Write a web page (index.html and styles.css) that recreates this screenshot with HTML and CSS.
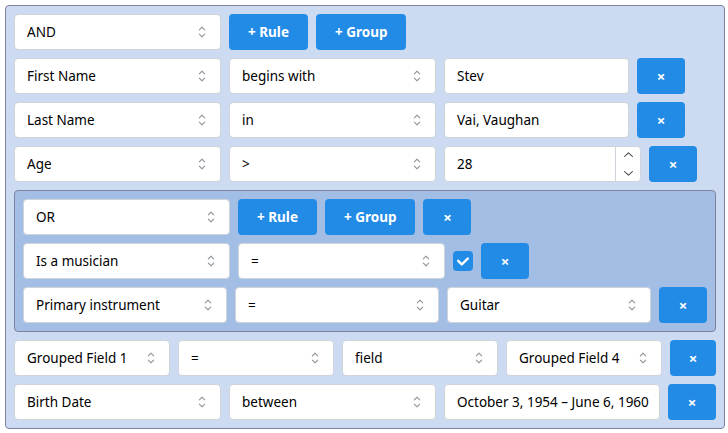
FILE: index.html
```html
<!DOCTYPE html>
<html lang="en">
<head>
<meta charset="utf-8">
<title>Query Builder</title>
<link rel="stylesheet" href="styles.css">
</head>
<body>
<div class="qb">
  <div class="group">
    <div class="row">
      <div class="select"><span class="val">AND</span><span class="chev"><svg width="18" height="18" viewBox="0 0 15 15"><path d="M4.93 5.43a.45.45 0 0 0 .64.64L7.5 4.14l1.93 1.93a.45.45 0 0 0 .64-.64L7.82 3.18a.45.45 0 0 0-.64 0L4.93 5.43zM10.07 9.57a.45.45 0 0 0-.64-.64L7.5 10.86 5.57 8.93a.45.45 0 0 0-.64.64l2.25 2.25a.45.45 0 0 0 .64 0l2.25-2.25z" fill="currentColor"/></svg></span></div>
      <button class="btn">+ Rule</button>
      <button class="btn">+ Group</button>
    </div>

    <div class="row">
      <div class="select"><span class="val">First Name</span><span class="chev"><svg width="18" height="18" viewBox="0 0 15 15"><path d="M4.93 5.43a.45.45 0 0 0 .64.64L7.5 4.14l1.93 1.93a.45.45 0 0 0 .64-.64L7.82 3.18a.45.45 0 0 0-.64 0L4.93 5.43zM10.07 9.57a.45.45 0 0 0-.64-.64L7.5 10.86 5.57 8.93a.45.45 0 0 0-.64.64l2.25 2.25a.45.45 0 0 0 .64 0l2.25-2.25z" fill="currentColor"/></svg></span></div>
      <div class="select"><span class="val">begins with</span><span class="chev"><svg width="18" height="18" viewBox="0 0 15 15"><path d="M4.93 5.43a.45.45 0 0 0 .64.64L7.5 4.14l1.93 1.93a.45.45 0 0 0 .64-.64L7.82 3.18a.45.45 0 0 0-.64 0L4.93 5.43zM10.07 9.57a.45.45 0 0 0-.64-.64L7.5 10.86 5.57 8.93a.45.45 0 0 0-.64.64l2.25 2.25a.45.45 0 0 0 .64 0l2.25-2.25z" fill="currentColor"/></svg></span></div>
      <div class="input text">Stev</div>
      <button class="btn rm">×</button>
    </div>

    <div class="row">
      <div class="select"><span class="val">Last Name</span><span class="chev"><svg width="18" height="18" viewBox="0 0 15 15"><path d="M4.93 5.43a.45.45 0 0 0 .64.64L7.5 4.14l1.93 1.93a.45.45 0 0 0 .64-.64L7.82 3.18a.45.45 0 0 0-.64 0L4.93 5.43zM10.07 9.57a.45.45 0 0 0-.64-.64L7.5 10.86 5.57 8.93a.45.45 0 0 0-.64.64l2.25 2.25a.45.45 0 0 0 .64 0l2.25-2.25z" fill="currentColor"/></svg></span></div>
      <div class="select"><span class="val">in</span><span class="chev"><svg width="18" height="18" viewBox="0 0 15 15"><path d="M4.93 5.43a.45.45 0 0 0 .64.64L7.5 4.14l1.93 1.93a.45.45 0 0 0 .64-.64L7.82 3.18a.45.45 0 0 0-.64 0L4.93 5.43zM10.07 9.57a.45.45 0 0 0-.64-.64L7.5 10.86 5.57 8.93a.45.45 0 0 0-.64.64l2.25 2.25a.45.45 0 0 0 .64 0l2.25-2.25z" fill="currentColor"/></svg></span></div>
      <div class="input text">Vai, Vaughan</div>
      <button class="btn rm">×</button>
    </div>

    <div class="row">
      <div class="select"><span class="val">Age</span><span class="chev"><svg width="18" height="18" viewBox="0 0 15 15"><path d="M4.93 5.43a.45.45 0 0 0 .64.64L7.5 4.14l1.93 1.93a.45.45 0 0 0 .64-.64L7.82 3.18a.45.45 0 0 0-.64 0L4.93 5.43zM10.07 9.57a.45.45 0 0 0-.64-.64L7.5 10.86 5.57 8.93a.45.45 0 0 0-.64.64l2.25 2.25a.45.45 0 0 0 .64 0l2.25-2.25z" fill="currentColor"/></svg></span></div>
      <div class="select"><span class="val">&gt;</span><span class="chev"><svg width="18" height="18" viewBox="0 0 15 15"><path d="M4.93 5.43a.45.45 0 0 0 .64.64L7.5 4.14l1.93 1.93a.45.45 0 0 0 .64-.64L7.82 3.18a.45.45 0 0 0-.64 0L4.93 5.43zM10.07 9.57a.45.45 0 0 0-.64-.64L7.5 10.86 5.57 8.93a.45.45 0 0 0-.64.64l2.25 2.25a.45.45 0 0 0 .64 0l2.25-2.25z" fill="currentColor"/></svg></span></div>
      <div class="input number">
        <span class="val">28</span>
        <span class="spin">
          <span class="step"><svg width="15" height="15" viewBox="0 0 15 15"><path d="M3.14 8.84a.5.5 0 0 0 .7.02L7.5 5.44l3.66 3.42a.5.5 0 1 0 .68-.73l-4-3.75a.5.5 0 0 0-.68 0l-4 3.750a.5.5 0 0 0-.02.71z" fill="currentColor"/></svg></span>
          <span class="step"><svg width="15" height="15" viewBox="0 0 15 15"><path d="M3.14 6.16a.5.5 0 0 1 .7-.02L7.5 9.56l3.66-3.42a.5.5 0 1 1 .68.73l-4 3.75a.5.5 0 0 1-.68 0l-4-3.75a.5.5 0 0 1-.02-.71z" fill="currentColor"/></svg></span>
        </span>
      </div>
      <button class="btn rm">×</button>
    </div>

    <div class="group">
      <div class="row">
        <div class="select"><span class="val">OR</span><span class="chev"><svg width="18" height="18" viewBox="0 0 15 15"><path d="M4.93 5.43a.45.45 0 0 0 .64.64L7.5 4.14l1.93 1.93a.45.45 0 0 0 .64-.64L7.82 3.18a.45.45 0 0 0-.64 0L4.93 5.43zM10.07 9.57a.45.45 0 0 0-.64-.64L7.5 10.86 5.57 8.93a.45.45 0 0 0-.64.64l2.25 2.25a.45.45 0 0 0 .64 0l2.25-2.25z" fill="currentColor"/></svg></span></div>
        <button class="btn">+ Rule</button>
        <button class="btn">+ Group</button>
        <button class="btn rm">×</button>
      </div>
      <div class="row">
        <div class="select"><span class="val">Is a musician</span><span class="chev"><svg width="18" height="18" viewBox="0 0 15 15"><path d="M4.93 5.43a.45.45 0 0 0 .64.64L7.5 4.14l1.93 1.93a.45.45 0 0 0 .64-.64L7.82 3.18a.45.45 0 0 0-.64 0L4.93 5.43zM10.07 9.57a.45.45 0 0 0-.64-.64L7.5 10.86 5.57 8.93a.45.45 0 0 0-.64.64l2.25 2.25a.45.45 0 0 0 .64 0l2.25-2.25z" fill="currentColor"/></svg></span></div>
        <div class="select"><span class="val">=</span><span class="chev"><svg width="18" height="18" viewBox="0 0 15 15"><path d="M4.93 5.43a.45.45 0 0 0 .64.64L7.5 4.14l1.93 1.93a.45.45 0 0 0 .64-.64L7.82 3.18a.45.45 0 0 0-.64 0L4.93 5.43zM10.07 9.57a.45.45 0 0 0-.64-.64L7.5 10.86 5.57 8.93a.45.45 0 0 0-.64.64l2.25 2.25a.45.45 0 0 0 .64 0l2.25-2.25z" fill="currentColor"/></svg></span></div>
        <span class="check"><svg width="12" height="9" viewBox="0 0 10 7"><path d="M4 4.586L1.707 2.293A1 1 0 1 0 .293 3.707l3 3a.997.997 0 0 0 1.414 0l5-5A1 1 0 1 0 8.293.293L4 4.586z" fill="currentColor"/></svg></span>
        <button class="btn rm">×</button>
      </div>
      <div class="row">
        <div class="select"><span class="val">Primary instrument</span><span class="chev"><svg width="18" height="18" viewBox="0 0 15 15"><path d="M4.93 5.43a.45.45 0 0 0 .64.64L7.5 4.14l1.93 1.93a.45.45 0 0 0 .64-.64L7.82 3.18a.45.45 0 0 0-.64 0L4.93 5.43zM10.07 9.57a.45.45 0 0 0-.64-.64L7.5 10.86 5.57 8.93a.45.45 0 0 0-.64.64l2.25 2.25a.45.45 0 0 0 .64 0l2.25-2.25z" fill="currentColor"/></svg></span></div>
        <div class="select"><span class="val">=</span><span class="chev"><svg width="18" height="18" viewBox="0 0 15 15"><path d="M4.93 5.43a.45.45 0 0 0 .64.64L7.5 4.14l1.93 1.93a.45.45 0 0 0 .64-.64L7.82 3.18a.45.45 0 0 0-.64 0L4.93 5.43zM10.07 9.57a.45.45 0 0 0-.64-.64L7.5 10.86 5.57 8.93a.45.45 0 0 0-.64.64l2.25 2.25a.45.45 0 0 0 .64 0l2.25-2.25z" fill="currentColor"/></svg></span></div>
        <div class="select"><span class="val">Guitar</span><span class="chev"><svg width="18" height="18" viewBox="0 0 15 15"><path d="M4.93 5.43a.45.45 0 0 0 .64.64L7.5 4.14l1.93 1.93a.45.45 0 0 0 .64-.64L7.82 3.18a.45.45 0 0 0-.64 0L4.93 5.43zM10.07 9.57a.45.45 0 0 0-.64-.64L7.5 10.86 5.57 8.93a.45.45 0 0 0-.64.64l2.25 2.25a.45.45 0 0 0 .64 0l2.25-2.25z" fill="currentColor"/></svg></span></div>
        <button class="btn rm">×</button>
      </div>
    </div>

    <div class="row">
      <div class="select short"><span class="val">Grouped Field 1</span><span class="chev"><svg width="18" height="18" viewBox="0 0 15 15"><path d="M4.93 5.43a.45.45 0 0 0 .64.64L7.5 4.14l1.93 1.93a.45.45 0 0 0 .64-.64L7.82 3.18a.45.45 0 0 0-.64 0L4.93 5.43zM10.07 9.57a.45.45 0 0 0-.64-.64L7.5 10.86 5.57 8.93a.45.45 0 0 0-.64.64l2.25 2.25a.45.45 0 0 0 .64 0l2.25-2.25z" fill="currentColor"/></svg></span></div>
      <div class="select short"><span class="val">=</span><span class="chev"><svg width="18" height="18" viewBox="0 0 15 15"><path d="M4.93 5.43a.45.45 0 0 0 .64.64L7.5 4.14l1.93 1.93a.45.45 0 0 0 .64-.64L7.82 3.18a.45.45 0 0 0-.64 0L4.93 5.43zM10.07 9.57a.45.45 0 0 0-.64-.64L7.5 10.86 5.57 8.93a.45.45 0 0 0-.64.64l2.25 2.25a.45.45 0 0 0 .64 0l2.25-2.25z" fill="currentColor"/></svg></span></div>
      <div class="select short"><span class="val">field</span><span class="chev"><svg width="18" height="18" viewBox="0 0 15 15"><path d="M4.93 5.43a.45.45 0 0 0 .64.64L7.5 4.14l1.93 1.93a.45.45 0 0 0 .64-.64L7.82 3.18a.45.45 0 0 0-.64 0L4.93 5.43zM10.07 9.57a.45.45 0 0 0-.64-.64L7.5 10.86 5.57 8.93a.45.45 0 0 0-.64.64l2.25 2.25a.45.45 0 0 0 .64 0l2.25-2.25z" fill="currentColor"/></svg></span></div>
      <div class="select short"><span class="val">Grouped Field 4</span><span class="chev"><svg width="18" height="18" viewBox="0 0 15 15"><path d="M4.93 5.43a.45.45 0 0 0 .64.64L7.5 4.14l1.93 1.93a.45.45 0 0 0 .64-.64L7.82 3.18a.45.45 0 0 0-.64 0L4.93 5.43zM10.07 9.57a.45.45 0 0 0-.64-.64L7.5 10.86 5.57 8.93a.45.45 0 0 0-.64.64l2.25 2.25a.45.45 0 0 0 .64 0l2.25-2.25z" fill="currentColor"/></svg></span></div>
      <button class="btn rm narrow">×</button>
    </div>

    <div class="row">
      <div class="select"><span class="val">Birth Date</span><span class="chev"><svg width="18" height="18" viewBox="0 0 15 15"><path d="M4.93 5.43a.45.45 0 0 0 .64.64L7.5 4.14l1.93 1.93a.45.45 0 0 0 .64-.64L7.82 3.18a.45.45 0 0 0-.64 0L4.93 5.43zM10.07 9.57a.45.45 0 0 0-.64-.64L7.5 10.86 5.57 8.93a.45.45 0 0 0-.64.64l2.25 2.25a.45.45 0 0 0 .64 0l2.25-2.25z" fill="currentColor"/></svg></span></div>
      <div class="select"><span class="val">between</span><span class="chev"><svg width="18" height="18" viewBox="0 0 15 15"><path d="M4.93 5.43a.45.45 0 0 0 .64.64L7.5 4.14l1.93 1.93a.45.45 0 0 0 .64-.64L7.82 3.18a.45.45 0 0 0-.64 0L4.93 5.43zM10.07 9.57a.45.45 0 0 0-.64-.64L7.5 10.86 5.57 8.93a.45.45 0 0 0-.64.64l2.25 2.25a.45.45 0 0 0 .64 0l2.25-2.25z" fill="currentColor"/></svg></span></div>
      <div class="input date">October 3, 1954 – June 6, 1960</div>
      <button class="btn rm">×</button>
    </div>
  </div>
</div>
</body>
</html>
```

FILE: styles.css
```css
html, body {
  margin: 0;
  background: #ffffff;
}

body {
  padding: 5px;
  font-family: "Noto Sans", "Open Sans", sans-serif;
  font-size: 13.5px;
  color: #000000;
}

.qb {
  width: 720px;
}

.group {
  display: flex;
  flex-direction: column;
  gap: 8px;
  padding: 8px;
  border: 1px solid #8081a2;
  border-radius: 4px;
  background: rgba(0, 75, 183, 0.2);
}

.row {
  display: flex;
  align-items: center;
  gap: 8px;
  height: 36px;
}

.select,
.input {
  box-sizing: border-box;
  height: 36px;
  border: 1px solid #ced4da;
  border-radius: 4px;
  background: #ffffff;
  display: flex;
  align-items: center;
  min-width: 0;
  white-space: nowrap;
}

.select {
  width: 207px;
  flex: 0 1 207px;
  padding-left: 12px;
}

.select.short {
  width: 156px;
  flex-basis: 156px;
}

.val {
  flex: 1;
  overflow: hidden;
}

.chev {
  width: 36px;
  height: 34px;
  flex-shrink: 0;
  display: flex;
  align-items: center;
  justify-content: center;
  color: #8f959b;
}

.input {
  padding: 0 12px;
  flex-shrink: 0;
}

.input.text {
  width: 185px;
}

.input.date {
  width: 216px;
}

.input.number {
  width: 197px;
  padding-right: 0;
}

.spin {
  width: 24px;
  height: 34px;
  flex-shrink: 0;
  border-left: 1px solid #ced4da;
  display: flex;
  flex-direction: column;
  color: #343a40;
}

.step {
  flex: 1;
  display: flex;
  align-items: center;
  justify-content: center;
}

.btn {
  box-sizing: border-box;
  height: 36px;
  padding: 0 19px;
  border: 0;
  border-radius: 4px;
  background: #228be6;
  color: #ffffff;
  font-family: inherit;
  font-size: 13.5px;
  font-weight: 700;
  display: flex;
  align-items: center;
  justify-content: center;
  flex-shrink: 0;
}

.btn.rm {
  width: 48px;
  padding: 0;
  font-size: 15px;
}

.btn.rm.narrow {
  width: 46px;
}

.check {
  width: 20px;
  height: 20px;
  flex-shrink: 0;
  border-radius: 4px;
  background: #228be6;
  color: #ffffff;
  display: flex;
  align-items: center;
  justify-content: center;
}
```
